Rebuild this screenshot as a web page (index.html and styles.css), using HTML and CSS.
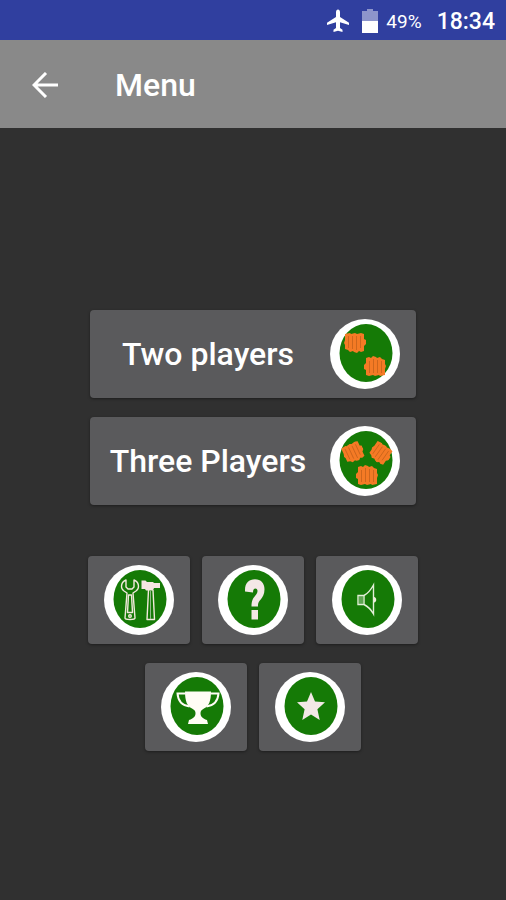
FILE: index.html
```html
<!doctype html>
<html lang="en">
	<head>
		<meta charset="utf-8">
		<meta name="viewport" content="width=device-width, initial-scale=1.0">
		<title>Menu</title>
		<link rel="stylesheet" href="styles.css">
	</head>
	<body>
		<!-- Shared shapes -->
		<svg class="defs" aria-hidden="true">
			<symbol id="disc" viewBox="0 0 70 70">
				<circle cx="35" cy="35" r="35" fill="#fff"/>
				<ellipse cx="36" cy="34" rx="26.5" ry="29" fill="#157a06"/>
			</symbol>
			<symbol id="fist" viewBox="0 0 22 20">
				<path d="M2 19v-5l-2-1V9l2-2V2l3-1 2 1 2-2 3 1 1 1 3-1 2 2 3 1v4l1 2-1 3v6l-5 1-1-1-4 1-2-1-4 1z" fill="#f47a25"/>
				<path d="M5.500 5v12M9.500 3v14M13.500 4v13M17.500 5v12" fill="none" stroke="#c9641c" stroke-width="0.900"/>
			</symbol>
		</svg>

		<div class="statusbar">
			<svg class="plane" viewBox="0 0 24 24"><path d="M23 16v-2.300l-9-5.600V3c0-1.100-.8-2.500-2-2.500S10 1.900 10 3v5.100l-9 5.600V16l9-2.700v5.700l-2.500 1.800V23l4.500-1.200 4.500 1.200v-2.200L14 19v-5.700z" fill="#fff"/></svg>
			<svg class="battery" viewBox="0 0 16 24"><path d="M5 0h6v2h5v11H0V2h5z" fill="#8d95cb"/><path d="M0 12h16v12H0z" fill="#fff"/></svg>
			<span class="percent">49%</span>
			<span class="clock">18:34</span>
		</div>

		<header class="toolbar">
			<a class="back" href="#" aria-label="Back">
				<svg viewBox="0 0 26 26"><path d="M26 13H2M14 1L2 13l12 12" fill="none" stroke="#fff" stroke-width="3"/></svg>
			</a>
			<h1>Menu</h1>
		</header>

		<main class="menu">
			<div class="modes">
				<button class="button wide" type="button">
					<span class="label">Two players</span>
					<svg class="icon" viewBox="0 0 70 70">
						<use href="#disc"/>
						<use href="#fist" x="14" y="14" width="22" height="20" transform="rotate(180 25 24)"/>
						<use href="#fist" x="34" y="37" width="22" height="20"/>
					</svg>
				</button>
				<button class="button wide" type="button">
					<span class="label">Three Players</span>
					<svg class="icon" viewBox="0 0 70 70">
						<use href="#disc"/>
						<use href="#fist" x="13" y="17" width="21" height="19" transform="rotate(155 23.5 26.5)"/>
						<use href="#fist" x="40" y="18" width="21" height="19" transform="rotate(215 50.5 27.5)"/>
						<use href="#fist" x="26" y="39" width="22" height="20"/>
					</svg>
				</button>
			</div>

			<div class="tools">
				<button class="button" type="button" aria-label="Settings">
					<svg class="icon" viewBox="0 0 70 70">
						<use href="#disc"/>
						<g fill="none" stroke="#f3e9dc" stroke-width="1.4" stroke-linejoin="round">
							<path d="M22 15c-5 2-6 8-2 11l3 2-2 25c0 2 10 2 10 0l-2-25 3-2c4-3 3-9-2-11v7l-2 2h-4l-2-2z"/>
							<path d="M24.500 30l-1 17.500h5l-1-17.500z"/>
							<circle cx="26" cy="51" r="1.300"/>
							<path d="M44.500 25L43 54.500h7.500L49 25"/>
							<path d="M46.500 26v28" stroke="#8fb987" stroke-width="1"/>
						</g>
						<path d="M37.500 15.500h4l1.500 1.500h6l1 1h6v5h-6l-1 2.500h-7l-1-1.500h-3.500z" fill="#f7e6e0"/>
					</svg>
				</button>
				<button class="button" type="button" aria-label="Help">
					<svg class="icon" viewBox="0 0 70 70">
						<use href="#disc"/>
						<path d="M27 25c0-7 4-10.700 10-10.700 6 0 9.500 4 9.500 10 0 5-2 8-4 10.500-2 2.400-2.500 3.200-2.500 6.700h-6.500c0-6 1.500-8 3.500-10.500 1.500-2 2.500-3 2.500-5 0-1.500-.8-2.500-2-2.500-1.700 0-2.500 1.500-2.500 4l-8-1z" fill="#f3e8e6"/>
						<path d="M33.500 45H40v9.500h-6.500z" fill="#f3e8e6"/>
					</svg>
				</button>
				<button class="button" type="button" aria-label="Sound">
					<svg class="icon" viewBox="0 0 70 70">
						<use href="#disc"/>
						<path d="M26 30.500h6v9h-6zM32 30.500c4-2 7-6 9.500-10.500v29c-2.500-4.500-5.500-7.500-9.500-9.500" fill="none" stroke="#e3efd8" stroke-width="1.400"/>
						<path d="M28 31v8M30 31v8" stroke="#a9cf9f" stroke-width="1"/>
						<path d="M42 32c3 .5 3 5 0 5.500z" fill="#f0eddb"/>
					</svg>
				</button>
				<button class="button" type="button" aria-label="Trophies">
					<svg class="icon" viewBox="0 0 70 70">
						<use href="#disc"/>
						<path d="M24 19.500h26c0 9-2 15-7 17-3 1.500-3.500 3-3.500 5 0 3 2 5 6.500 6.500l1 4H27l1-4c4.500-1.500 6.500-3.500 6.500-6.500 0-2-.5-3.500-3.500-5-5-2-7-8-7-17z" fill="#fffdf5"/>
						<path d="M24.500 21.500h-8c.5 7 4.500 12 12 13M49.500 21.500h8c-.5 7-4.500 12-12 13" fill="none" stroke="#fffdf5" stroke-width="2"/>
					</svg>
				</button>
				<button class="button" type="button" aria-label="Rate">
					<svg class="icon" viewBox="0 0 70 70">
						<use href="#disc"/>
						<path d="M36 20l4 9.500 10 .8-7.600 6.900L44.700 48 36 42.500 27.300 48l2.300-10.800-7.600-6.900 10-.8z" fill="#f3e8e6"/>
					</svg>
				</button>
			</div>
		</main>
	</body>
</html>
```
FILE: styles.css
```css
* {
	box-sizing: border-box;
}
body {
	margin: 0;
	min-height: 100vh;
	display: flex;
	flex-direction: column;
	font-family: Roboto, "Liberation Sans", sans-serif;
	color: #fff;
	background-color: #303030;
}
svg {
	display: block;
}
.defs {
	display: none;
}

/* Status bar */
.statusbar {
	height: 40px;
	padding: 2px 11px 0;
	display: flex;
	align-items: center;
	justify-content: flex-end;
	background-color: #303f9f;
}
.plane {
	width: 24px;
	height: 26px;
	margin-right: 12px;
}
.battery {
	width: 16px;
	height: 24px;
	margin-right: 8px;
}
.percent {
	font-size: 19px;
	margin-right: 15px;
}
.clock {
	font-size: 23px;
	font-weight: 500;
}

/* Toolbar */
.toolbar {
	height: 88px;
	padding: 2px 32px 0;
	display: flex;
	align-items: center;
	gap: 57px;
	background-color: #898989;
}
.back svg {
	width: 26px;
	height: 26px;
}
h1 {
	margin: 0;
	font-size: 32px;
	font-weight: 500;
}

/* Menu */
.menu {
	flex: 1;
	padding: 32px 16px 0;
	display: flex;
	flex-direction: column;
	align-items: center;
	justify-content: center;
	gap: 51px;
}
.modes {
	display: flex;
	flex-direction: column;
	gap: 19px;
}
.tools {
	max-width: 340px;
	display: flex;
	flex-wrap: wrap;
	justify-content: center;
	gap: 19px 12px;
}
.button {
	height: 88px;
	padding: 0 16px;
	display: flex;
	align-items: center;
	border: none;
	border-radius: 4px;
	color: #fff;
	font-family: inherit;
	font-size: 32px;
	font-weight: 500;
	background-color: #5a5a5c;
	box-shadow: 0 1px 3px rgba(0,0,0,0.4);
	cursor: pointer;
}
.button:hover {
	background-color: #68686a;
}
.wide {
	width: 326px;
	gap: 20px;
}
.label {
	flex: 1;
	text-align: center;
	white-space: nowrap;
}
.icon {
	width: 70px;
	height: 70px;
	flex: none;
}
```
